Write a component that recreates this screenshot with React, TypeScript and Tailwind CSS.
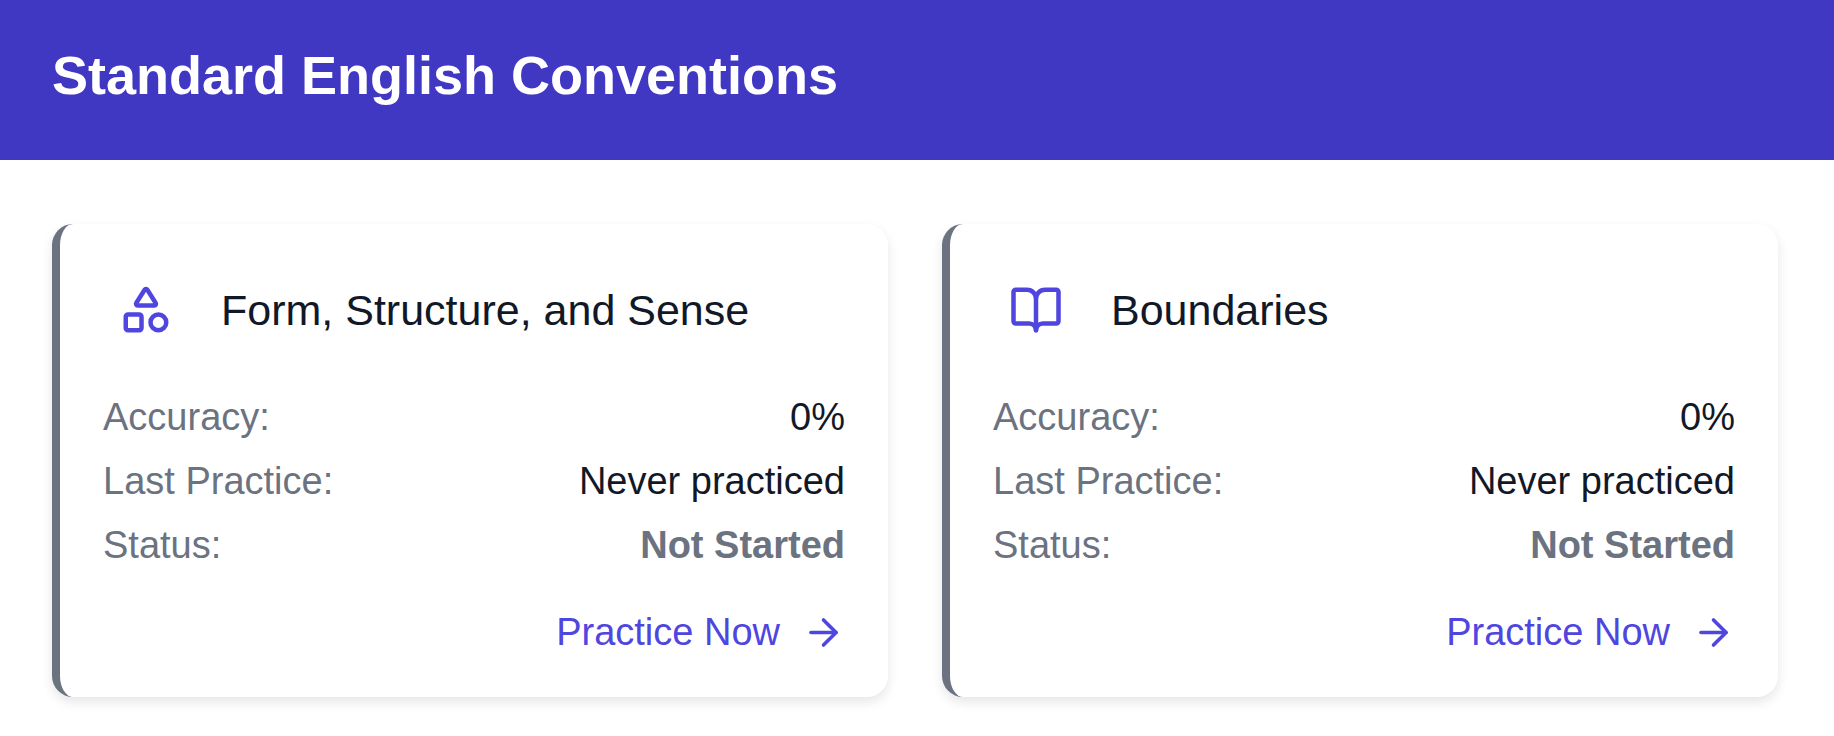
import { ArrowRight, BookOpen, Shapes, type LucideIcon } from "lucide-react";

type Skill = {
  name: string;
  icon: LucideIcon;
  accuracy: number;
  lastPractice: string;
  status: string;
};

const skills: Skill[] = [
  {
    name: "Form, Structure, and Sense",
    icon: Shapes,
    accuracy: 0,
    lastPractice: "Never practiced",
    status: "Not Started",
  },
  {
    name: "Boundaries",
    icon: BookOpen,
    accuracy: 0,
    lastPractice: "Never practiced",
    status: "Not Started",
  },
];

function SkillCard({ skill }: { skill: Skill }) {
  const Icon = skill.icon;
  return (
    <article className="rounded-[21px] border-l-8 border-[#6b7280] bg-white p-[43px] shadow-[0_5px_12px_rgba(0,0,0,0.1)]">
      <div className="flex items-center gap-8">
        <span className="p-4 text-[#4f46e0]">
          <Icon className="size-[54px]" aria-hidden="true" />
        </span>
        <h2 className="text-[43px] leading-[54px]">{skill.name}</h2>
      </div>
      <dl className="mt-[37px] flex flex-col gap-[10px]">
        <div className="flex justify-between">
          <dt className="text-[#6b7280]">Accuracy:</dt>
          <dd>{skill.accuracy}%</dd>
        </div>
        <div className="flex justify-between">
          <dt className="text-[#6b7280]">Last Practice:</dt>
          <dd>{skill.lastPractice}</dd>
        </div>
        <div className="flex justify-between">
          <dt className="text-[#6b7280]">Status:</dt>
          <dd className="font-bold text-[#6b7280]">{skill.status}</dd>
        </div>
      </dl>
      <div className="mt-[38px] flex justify-end">
        <button
          type="button"
          className="flex cursor-pointer items-center gap-[22px] leading-[44px] text-[#4f46e0]"
        >
          Practice Now
          <ArrowRight className="size-[43px]" aria-hidden="true" />
        </button>
      </div>
    </article>
  );
}

export default function App() {
  return (
    <div className="min-h-screen bg-white font-['Liberation_Sans',Arial,sans-serif] text-[38px] leading-[54px] text-[#111827]">
      <header className="bg-[#4038c2] pt-[39px] pr-14 pb-[49px] pl-[52px]">
        <h1 className="text-[54px] leading-[72px] font-bold text-white">
          Standard English Conventions
        </h1>
      </header>
      <main className="grid grid-cols-1 gap-[54px] pt-16 pr-14 pb-10 pl-[52px] lg:grid-cols-2">
        {skills.map((skill) => (
          <SkillCard key={skill.name} skill={skill} />
        ))}
      </main>
    </div>
  );
}
